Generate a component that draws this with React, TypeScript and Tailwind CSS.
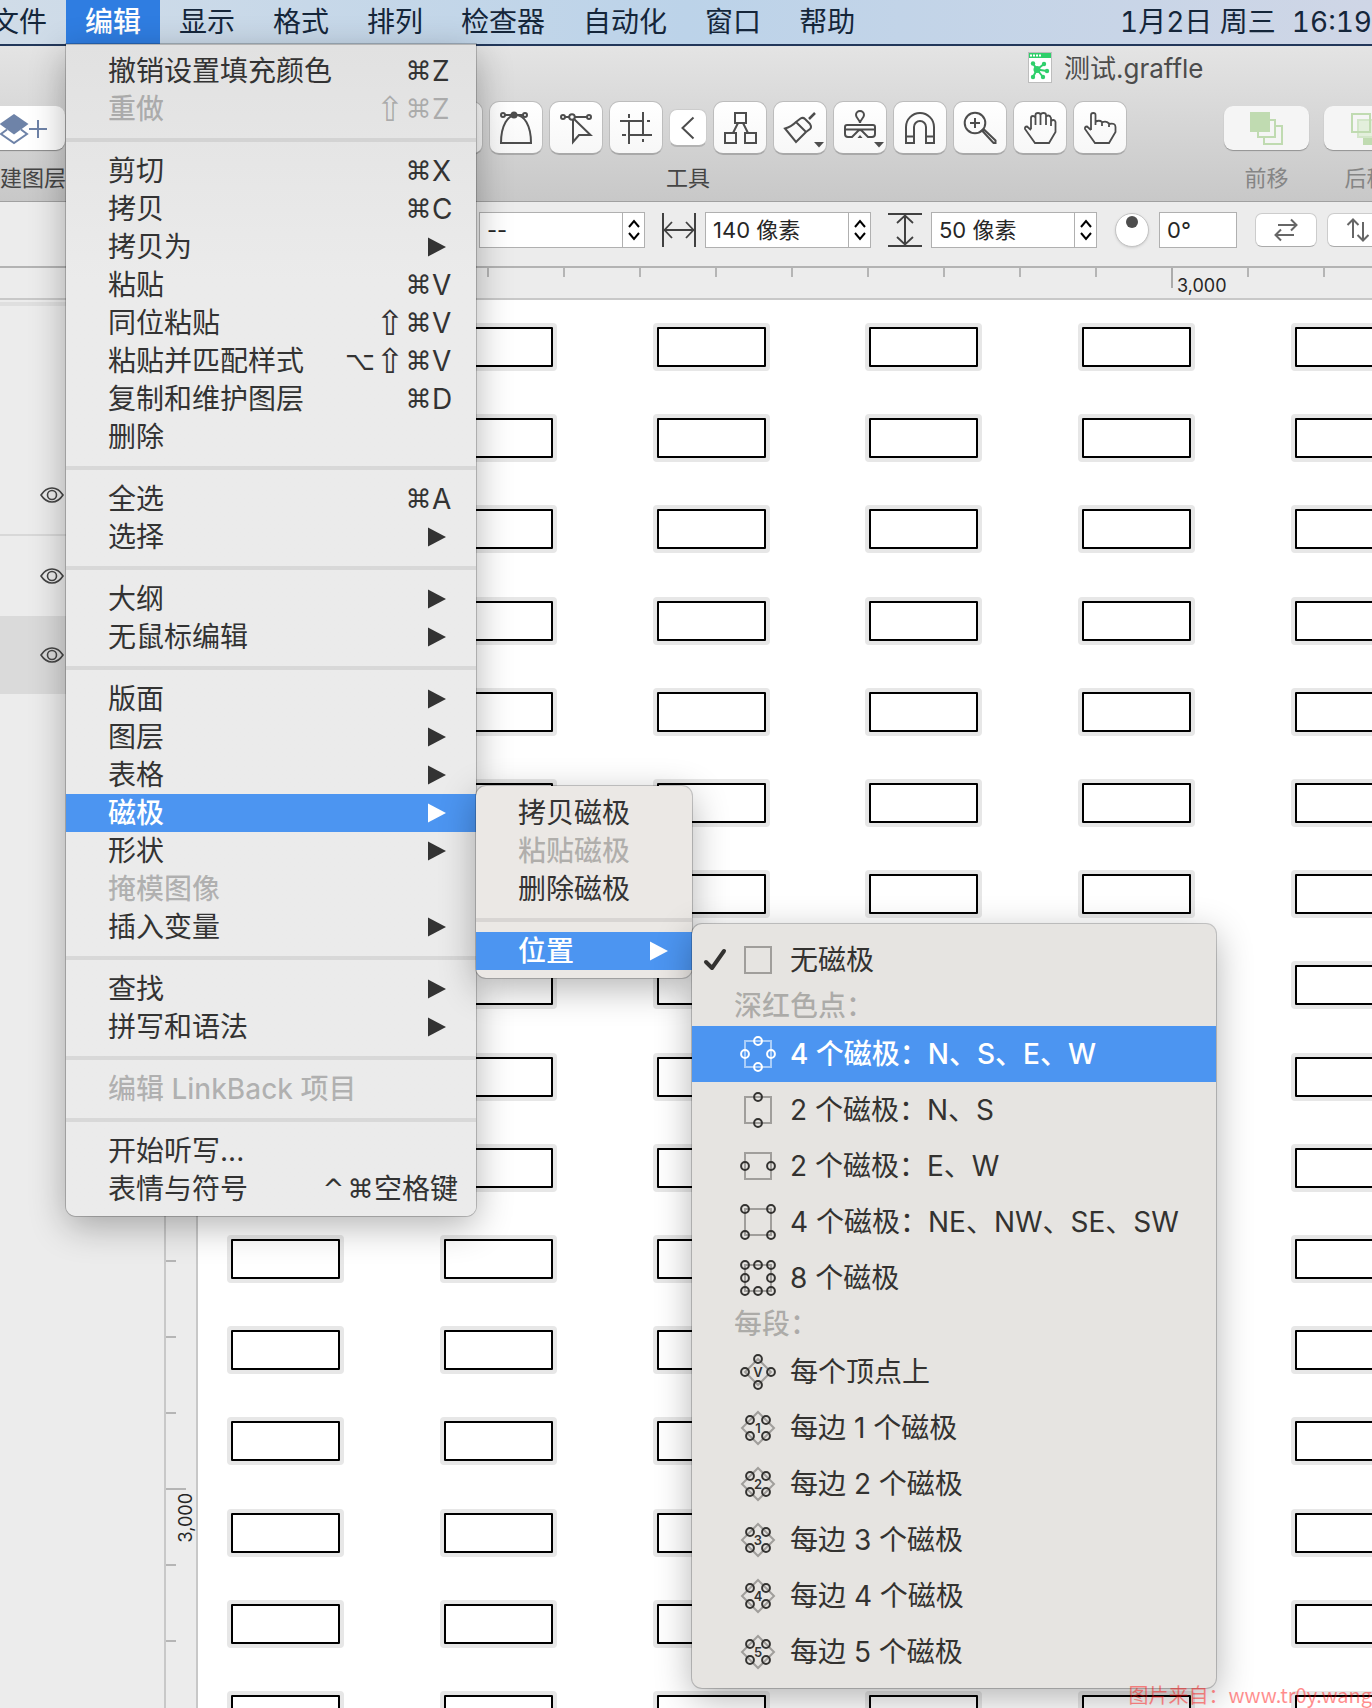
import React from 'react';

type Row = {
  label: string;
  mods?: string[];
  hotkey?: string;
  wide?: boolean;
  sub?: boolean;
  off?: boolean;
  on?: boolean;
};

const menuTitles = ['文件', '编辑', '显示', '格式', '排列', '检查器', '自动化', '窗口', '帮助'];

const editMenu: Row[][] = [
  [
    { label: '撤销设置填充颜色', mods: ['⌘'], hotkey: 'Z' },
    { label: '重做', mods: ['⇧', '⌘'], hotkey: 'Z', off: true },
  ],
  [
    { label: '剪切', mods: ['⌘'], hotkey: 'X' },
    { label: '拷贝', mods: ['⌘'], hotkey: 'C' },
    { label: '拷贝为', sub: true },
    { label: '粘贴', mods: ['⌘'], hotkey: 'V' },
    { label: '同位粘贴', mods: ['⇧', '⌘'], hotkey: 'V' },
    { label: '粘贴并匹配样式', mods: ['⌥', '⇧', '⌘'], hotkey: 'V' },
    { label: '复制和维护图层', mods: ['⌘'], hotkey: 'D' },
    { label: '删除' },
  ],
  [
    { label: '全选', mods: ['⌘'], hotkey: 'A' },
    { label: '选择', sub: true },
  ],
  [
    { label: '大纲', sub: true },
    { label: '无鼠标编辑', sub: true },
  ],
  [
    { label: '版面', sub: true },
    { label: '图层', sub: true },
    { label: '表格', sub: true },
    { label: '磁极', sub: true, on: true },
    { label: '形状', sub: true },
    { label: '掩模图像', off: true },
    { label: '插入变量', sub: true },
  ],
  [
    { label: '查找', sub: true },
    { label: '拼写和语法', sub: true },
  ],
  [{ label: '编辑 LinkBack 项目', off: true }],
  [
    { label: '开始听写...' },
    { label: '表情与符号', mods: ['^', '⌘'], hotkey: '空格键', wide: true },
  ],
];

const magnetMenu: Row[][] = [
  [{ label: '拷贝磁极' }, { label: '粘贴磁极', off: true }, { label: '删除磁极' }],
  [{ label: '位置', sub: true, on: true }],
];

function Arrow() {
  return (
    <svg className="h-5 w-[18px]" viewBox="0 0 18 20" fill="currentColor" aria-hidden="true">
      <path d="M0 0.5 18 10 0 19.5Z" />
    </svg>
  );
}

function Modifier({ mark }: { mark: string }) {
  const size = mark === '⇧' ? 'w-[30px] text-[34px]' : mark === '⌥' ? 'w-[30px] text-[26px]' : 'w-[27px] text-[26px]';
  return <span className={`text-center font-['DejaVu_Sans'] ${size}`}>{mark}</span>;
}

function MenuRow({ row, arrowPad }: { row: Row; arrowPad: string }) {
  const tone = row.on ? 'bg-[#4c95f1] text-white' : row.off ? 'text-black/25' : 'text-[#333333]';
  return (
    <button
      type="button"
      role="menuitem"
      disabled={row.off}
      className={`flex h-[38px] w-full items-center justify-between pl-[42px] text-[28px] leading-[36px] whitespace-nowrap ${tone}`}
    >
      <span className={row.on || row.off ? 'font-medium' : ''}>{row.label}</span>
      {row.sub && (
        <span className={arrowPad}>
          <Arrow />
        </span>
      )}
      {row.hotkey && (
        <span className="flex items-center pr-[18px]">
          {row.mods?.map((m) => (
            <Modifier key={m} mark={m} />
          ))}
          <span className={row.wide ? '' : 'w-[26px] text-left'}>{row.hotkey}</span>
        </span>
      )}
    </button>
  );
}

function MenuBody({ groups, arrowPad }: { groups: Row[][]; arrowPad: string }) {
  return (
    <>
      {groups.map((g, i) => (
        <React.Fragment key={i}>
          {i > 0 && (
            <div role="separator" className="py-[10px]">
              <div className="h-1 bg-black/8" />
            </div>
          )}
          {g.map((r) => (
            <MenuRow key={r.label} row={r} arrowPad={arrowPad} />
          ))}
        </React.Fragment>
      ))}
    </>
  );
}

type Pt = [number, number];
const N: Pt = [18, 5];
const S: Pt = [18, 31];
const W: Pt = [5, 18];
const E: Pt = [31, 18];
const CORNERS: Pt[] = [[5, 5], [31, 5], [5, 31], [31, 31]];

function MagnetIcon({ dots, shape, mark, on }: { dots: Pt[]; shape: 'square' | 'diamond' | 'wide'; mark?: string; on?: boolean }) {
  return (
    <svg className="size-9" viewBox="0 0 36 36" fill="none" strokeWidth="2" aria-hidden="true">
      <g stroke={on ? '#a9cdf9' : '#a09e9b'}>
        {shape === 'square' && <rect x="5" y="5" width="26" height="26" />}
        {shape === 'diamond' && <path d="M18 5 31 18 18 31 5 18Z" />}
        {shape === 'wide' && <path d="M18 2 34 18 18 34 2 18Z" />}
      </g>
      {dots.map(([x, y]) => (
        <circle key={`${x}-${y}`} cx={x} cy={y} r="3.9" stroke={on ? '#ffffff' : '#333230'} />
      ))}
      {mark && (
        <text x="18" y="23" textAnchor="middle" fontSize="13" fontWeight="600" fill="#333230" fontFamily="Inter, sans-serif">
          {mark}
        </text>
      )}
    </svg>
  );
}

const EDGE: Pt[] = [[10, 10], [26, 10], [10, 26], [26, 26]];

function PositionRow({ label, icon, on, checked }: { label: string; icon: React.ReactNode; on?: boolean; checked?: boolean }) {
  return (
    <button
      type="button"
      role="menuitemradio"
      aria-checked={!!checked}
      className={`flex h-14 w-full items-center text-[28px] whitespace-nowrap ${on ? 'bg-[#4c95f1] font-medium text-white' : 'text-[#333230]'}`}
    >
      <span className="flex w-12 shrink-0 pl-[11px]">
        {checked && (
          <svg className="size-6" viewBox="0 0 24 24" fill="none" stroke="currentColor" strokeWidth="4" strokeLinecap="round" strokeLinejoin="round" aria-hidden="true">
            <path d="M3 14 9 20 21 3" />
          </svg>
        )}
      </span>
      {icon}
      <span className="pl-[14px]">{label}</span>
    </button>
  );
}

function GroupHead({ children }: { children: string }) {
  return <div className="h-[38px] pl-[42px] text-[28px] leading-[36px] font-medium text-black/25">{children}</div>;
}

function ToolButton({ label, drop, children }: { label: string; drop?: boolean; children?: React.ReactNode }) {
  return (
    <button
      type="button"
      aria-label={label}
      className="size-[54px] rounded-[10px] border border-b-2 border-[#bdbdbd] border-b-[#a9a9a9] bg-gradient-to-b from-white to-[#f7f7f7]"
    >
      <svg className="-m-px size-[54px]" viewBox="0 0 54 54" fill="none" stroke="#4d4d4d" strokeWidth="2" aria-hidden="true">
        {children}
        {drop && <path d="M41 41H51L46 46.5Z" fill="#4d4d4d" stroke="none" />}
      </svg>
    </button>
  );
}

function Toolbar() {
  return (
    <div className="-ml-[22px] flex items-start text-[22px] leading-6 whitespace-nowrap text-[#454545]">
      <div className="flex shrink-0 flex-col items-center gap-[11px]">
        <div className="flex h-[54px] items-center">
          <button type="button" aria-label="新建图层" className="h-11 w-[86px] rounded-[9px] bg-white shadow-[0_1px_1px_rgba(0,0,0,0.35)]">
            <svg className="h-11 w-[86px]" viewBox="0 0 86 44" fill="none" stroke="#6e83a8" strokeWidth="2" aria-hidden="true">
              <path d="M28 23.5 22 28 35 37 48 28 42 23.5" />
              <path d="M35 8 49.500 18 35 28.500 20.500 18Z" fill="#6e83a8" stroke="none" />
              <path d="M50 23H68M59 14V32" />
            </svg>
          </button>
        </div>
        <span>新建图层</span>
      </div>
      <div className="ml-[183px] flex shrink-0 flex-col items-center gap-[11px]">
        <div className="flex h-[54px] items-center gap-[6px]">
          <ToolButton label="选择" />
          <ToolButton label="形状" />
          <ToolButton label="直线" />
          <ToolButton label="文本" />
          <ToolButton label="钢笔">
            <path d="M12 42C12 24 19 14 27 14S42 24 42 42Z" />
            <path d="M16 14H34" />
            <circle cx="14" cy="14" r="2" />
            <circle cx="36" cy="14" r="2" />
            <circle cx="25" cy="14" r="2.500" fill="#4d4d4d" />
          </ToolButton>
          <ToolButton label="点编辑">
            <path d="M16 16H20M26 16H38M24 19V41L30 34H41.500L25 18" />
            <circle cx="14" cy="16" r="2" />
            <circle cx="23" cy="16" r="2.800" />
            <circle cx="40" cy="16" r="2" />
          </ToolButton>
          <ToolButton label="画板">
            <path d="M20 20V43M20 13V17M34 11V35M34 38V41M11 20H35M38 20H41M19 34H43M13 34H17" />
          </ToolButton>
          <button
            type="button"
            aria-label="收起"
            className="size-[38px] rounded-lg border border-b-2 border-[#cccccc] border-b-[#b3b3b3] bg-white"
          >
            <svg className="-m-px size-[38px]" viewBox="0 0 38 38" fill="none" stroke="#4d4d4d" strokeWidth="2" aria-hidden="true">
              <path d="M24.500 8.500 13.500 19 24.500 29.500" />
            </svg>
          </button>
          <ToolButton label="图表">
            <rect x="22" y="12" width="11" height="10" />
            <rect x="12" y="32" width="11" height="10" />
            <rect x="32" y="32" width="11" height="10" />
            <path d="M25 22 20 32M30 22 35 32" />
          </ToolButton>
          <ToolButton label="样式刷" drop>
            <path d="M42 12 36 18" strokeWidth="2.500" />
            <path d="M23 21 27.500 17.500Q30 16 32 18L37 23Q39 26 37 28L33 31ZM23 21Q18 26 12 27.500L23 41Q27 37 33 31" />
          </ToolButton>
          <ToolButton label="图章" drop>
            <path d="M27 22C27 19 23 17 23 14A4 4 0 0 1 31 14C31 17 27 19 27 22Z" />
            <path d="M14 24H40Q42 24 42 26V33Q42 36 39 36H35L29 30Q27 28 25 30L19 36H15Q12 36 12 33V26Q12 24 14 24ZM12 28.500H42" />
            <path d="M27 34 29.500 37H24.500Z" fill="#4d4d4d" stroke="none" />
          </ToolButton>
          <ToolButton label="磁铁">
            <path d="M13 42V26A14 14 0 0 1 41 26V42H33V26A6 6 0 0 0 21 26V42ZM13 35.500H21M33 35.500H41" />
          </ToolButton>
          <ToolButton label="缩放">
            <circle cx="22" cy="22" r="10.300" />
            <path d="M22 17V27M17 22H27M29 29.500 31 28.500 42.500 39.500V42H40.500Z" />
          </ToolButton>
          <ToolButton label="手">
            <path d="M18 28V17Q18 15 20 15T22.500 17V24M22.500 17V14Q22.500 12 25 12T27.500 14V24M27.500 14Q28 12 30.500 12T33 14V24M33 15.500Q34 14.500 35.500 14.500T38 17V25M38 20Q39 19 40.500 19T42.500 21V31L36 42H22L12 28Q11.500 25.500 14 25.500L18 29" strokeWidth="1.800" />
          </ToolButton>
          <ToolButton label="浏览">
            <path d="M18 29V14Q18 12 20.300 12T22.500 14V24M22.500 21Q26 18.500 29 21V25M29 21.500Q33 19.500 36 22.500V26M36 23Q42.500 21.500 42.500 26V31L36 42H22L12 28Q11.500 25.500 14 25.500L18 29" strokeWidth="1.800" />
          </ToolButton>
        </div>
        <span>工具</span>
      </div>
      <div className="ml-[97px] flex shrink-0 gap-[15px] text-[#858585]">
        <div className="flex flex-col items-center gap-[11px]">
          <div className="flex h-[54px] items-center">
            <button type="button" aria-label="前移" className="h-11 w-[85px] rounded-[9px] bg-[#f5f5f5] shadow-[0_1px_1px_rgba(0,0,0,0.3)]">
              <svg className="h-11 w-[85px]" viewBox="0 0 85 44" fill="none" stroke="#c0dbb1" strokeWidth="2" aria-hidden="true">
                <rect x="40" y="20" width="18" height="18" />
                <rect x="34" y="14" width="17" height="17" fill="#f5f5f5" />
                <rect x="26" y="6" width="20" height="20" fill="#c0dbb1" stroke="none" />
              </svg>
            </button>
          </div>
          <span>前移</span>
        </div>
        <div className="flex flex-col items-center gap-[11px]">
          <div className="flex h-[54px] items-center">
            <button type="button" aria-label="后移" className="h-11 w-[85px] rounded-[9px] bg-[#f5f5f5] shadow-[0_1px_1px_rgba(0,0,0,0.3)]">
              <svg className="h-11 w-[85px]" viewBox="0 0 85 44" fill="none" stroke="#c0dbb1" strokeWidth="2" aria-hidden="true">
                <rect x="39" y="19" width="20" height="20" fill="#c0dbb1" stroke="none" />
                <rect x="34" y="14" width="17" height="17" fill="#e3efdc" stroke="#d3e6c9" />
                <rect x="28" y="8" width="18" height="18" />
              </svg>
            </button>
          </div>
          <span>后移</span>
        </div>
      </div>
    </div>
  );
}

function Field({ label, value }: { label: string; value: string }) {
  return (
    <div className="flex h-9 shrink-0">
      <input aria-label={label} defaultValue={value} className="w-36 border border-[#b0b0b0] bg-white px-[7px] text-[22px] text-[#262626] outline-none" />
      <button type="button" aria-label={`${label}增减`} className="w-[22px] border border-l-0 border-[#b0b0b0] bg-white">
        <svg className="mx-auto h-[22px] w-3" viewBox="0 0 12 22" fill="none" stroke="#000000" strokeWidth="2" aria-hidden="true">
          <path d="M1 8 6 2 11 8M1 14 6 20 11 14" />
        </svg>
      </button>
    </div>
  );
}

function SpanIcon({ upright }: { upright?: boolean }) {
  return (
    <svg className={`size-[34px] ${upright ? 'rotate-90' : ''}`} viewBox="0 0 34 34" fill="none" stroke="#404040" strokeWidth="2" aria-hidden="true">
      <path d="M1 0V34M33 0V34M1 17H33" />
      <path d="M10 9 2.500 17 10 25M24 9 31.500 17 24 25" strokeWidth="1.800" />
    </svg>
  );
}

function PropertyBar() {
  return (
    <div className="flex h-[66px] items-start border-b-2 border-[#b3b3b3] bg-[#ececec] pt-[10px] pl-[479px]">
      <Field label="垂直位置" value="--" />
      <div className="ml-[17px] flex shrink-0 items-center gap-[9px]">
        <SpanIcon />
        <Field label="宽度" value="140 像素" />
      </div>
      <div className="ml-[17px] flex shrink-0 items-center gap-[9px]">
        <SpanIcon upright />
        <Field label="高度" value="50 像素" />
      </div>
      <div className="ml-[18px] flex h-9 shrink-0 items-center gap-[10px]">
        <button type="button" aria-label="旋转" className="flex size-[34px] justify-center rounded-full border border-[#c4c4c4] bg-white pt-[2px] shadow-sm">
          <span className="size-3 rounded-full bg-[#4d4d4d]" />
        </button>
        <input aria-label="角度" defaultValue="0°" className="h-9 w-[78px] border border-[#b0b0b0] bg-white px-[7px] text-[22px] text-[#262626] outline-none" />
      </div>
      <div className="ml-[18px] flex h-9 shrink-0 items-center gap-[10px]">
        <button type="button" aria-label="水平翻转" className="flex h-[34px] w-[62px] items-center justify-center rounded-[7px] border border-[#cccccc] border-b-[#aaaaaa] bg-white">
          <svg className="size-6" viewBox="0 0 24 24" fill="none" stroke="#666666" strokeWidth="2" aria-hidden="true">
            <path d="M4 7H22M17 1.500 22.500 7 17 12.500M20 17H2M7 11.500 1.500 17 7 22.500" />
          </svg>
        </button>
        <button type="button" aria-label="垂直翻转" className="flex h-[34px] w-[62px] items-center justify-center rounded-[7px] border border-[#cccccc] border-b-[#aaaaaa] bg-white">
          <svg className="size-6" viewBox="0 0 24 24" fill="none" stroke="#666666" strokeWidth="2" aria-hidden="true">
            <path d="M7 20V2M1.500 7 7 1.500 12.500 7M17 4V22M11.500 17 17 22.500 22.500 17" />
          </svg>
        </button>
      </div>
    </div>
  );
}

function EyeRow({ selected, line }: { selected?: boolean; line?: boolean }) {
  return (
    <div className={`flex items-center pl-10 ${selected ? 'h-[78px] bg-[#dadada]' : 'h-20'} ${line ? 'border-b-2 border-[#d8d8d8]' : ''}`}>
      <button type="button" aria-label="显示图层">
        <svg className="h-4 w-6" viewBox="0 0 24 16" fill="none" stroke="#454545" strokeWidth="1.600" aria-hidden="true">
          <path d="M1 8Q5.500 1 12 1T23 8Q18.500 15 12 15T1 8Z" />
          <circle cx="12" cy="8" r="4.500" />
        </svg>
      </button>
    </div>
  );
}

const hTicks = Array.from({ length: 15 }, (_, i) => i);
const vTicks = Array.from({ length: 18 }, (_, i) => i);
const shapeCols = Array.from({ length: 6 }, (_, i) => 29 + Math.round(i * 212.8));
const shapeRows = Array.from({ length: 16 }, (_, i) => 23 + Math.round(i * 91.2));

function HRuler() {
  return (
    <div className="flex h-8 border-b-2 border-[#c8c8c8] bg-[#ececec]">
      <div className="w-[107px] shrink-0" />
      {hTicks.map((i) => (
        <div key={i} className="w-[76px] shrink-0">
          {i === 14 ? (
            <div className="flex h-5 w-[76px] border-l-2 border-[#ababab]">
              <span className="pt-[6px] pl-1 text-[18px] leading-[24px] text-[#262626]">3,000</span>
            </div>
          ) : (
            <div className="h-[9px] w-[2px] bg-[#b5b5b5]" />
          )}
        </div>
      ))}
      <div className="h-[9px] w-[76px] shrink-0 border-l-2 border-[#b5b5b5]" />
      <div className="h-[9px] w-[40px] shrink-0 border-l-2 border-[#b5b5b5]" />
    </div>
  );
}

function VRuler() {
  return (
    <div className="w-[34px] shrink-0 overflow-hidden border-x-2 border-[#c8c8c8] bg-[#ececec] pt-12">
      {vTicks.map((i) => (
        <div key={i} className={i === 17 ? 'h-[2px]' : 'h-[76px]'}>
          {i === 15 ? (
            <div className="w-5 border-t-2 border-[#b5b5b5]">
              <span className="mt-[3px] ml-[9px] block rotate-180 text-[18px] leading-[22px] text-[#262626] [writing-mode:vertical-rl]">3,000</span>
            </div>
          ) : (
            <div className="h-[2px] w-[10px] bg-[#b5b5b5]" />
          )}
        </div>
      ))}
    </div>
  );
}

export default function App() {
  return (
    <div className="relative flex min-h-screen flex-col overflow-hidden bg-white font-[Inter,'Noto_Sans_CJK_SC',sans-serif]">
      <nav className="flex h-[46px] items-stretch justify-between overflow-hidden border-b-2 border-[#22375a] bg-gradient-to-r from-[#d0dce8] via-[#bcd3e9] to-[#cfd6e6] text-[28px] leading-[44px] whitespace-nowrap text-[#15263a]">
        <div className="-ml-7 flex">
          {menuTitles.map((t) => (
            <button key={t} type="button" className={`px-[19px] ${t === '编辑' ? 'bg-[#2f7de1] font-medium text-white' : ''}`}>
              {t}
            </button>
          ))}
        </div>
        <div className="flex gap-4 tabular-nums">
          <span>1月2日 周三</span>
          <span>16:19</span>
        </div>
      </nav>

      <header className="overflow-hidden border-b border-[#a0a0a0] bg-gradient-to-b from-[#e4e4e4] to-[#c8c8c8] pb-[11px]">
        <div className="flex h-[55px] items-start gap-3 pt-[6px] pl-[1028px] text-[26px] leading-[34px] whitespace-nowrap text-[#4c4c4c]">
          <svg className="h-[31px] w-6 shrink-0" viewBox="0 0 24 31" aria-hidden="true">
            <rect x="0.500" y="0.500" width="23" height="30" fill="#ffffff" stroke="#bdbdbd" />
            <rect x="1" y="1" width="22" height="5" fill="#2fcf6b" />
            <path d="M2 3.500H13" stroke="#ffffff" strokeWidth="2" strokeDasharray="2 1" />
            <path d="M9 17.500 5 11.500M9 17.500 16 12M9 17.500 19 19M9 17.500 15 25M9 17.500 5 25" stroke="#2fcf6b" strokeWidth="2" />
            <g fill="#2fcf6b">
              <circle cx="9" cy="17.500" r="3.500" />
              <circle cx="5" cy="11.500" r="2.200" />
              <circle cx="16" cy="12" r="2.200" />
              <circle cx="19" cy="19" r="2.200" />
              <circle cx="15" cy="25" r="2.200" />
              <circle cx="5" cy="25" r="2.200" />
            </g>
          </svg>
          <h1>测试.graffle</h1>
        </div>
        <Toolbar />
      </header>

      <PropertyBar />
      <HRuler />

      <main className="flex flex-1">
        <aside className="w-[164px] shrink-0 bg-[#ececec] pt-[2px]">
          <div className="h-1 bg-[#dfdfdf]" />
          <div className="h-[150px]" />
          <EyeRow line />
          <EyeRow />
          <EyeRow selected />
        </aside>
        <VRuler />
        <section className="relative min-w-0 flex-1 overflow-hidden bg-white" aria-label="画布">
          {shapeRows.map((y) =>
            shapeCols.map((x) => (
              <div key={`${x}-${y}`} className="absolute h-12 w-[117px] rounded-[4px] border-4 border-[#e7e7e7]" style={{ left: x, top: y }}>
                <div className="h-full w-full rounded-[1px] border-2 border-black bg-white" />
              </div>
            )),
          )}
        </section>
      </main>

      <div role="menu" aria-label="编辑" className="absolute top-[44px] left-[66px] w-[410px] rounded-b-[10px] border-t border-[#b5b5b5] bg-gradient-to-b from-[#e1e1e1] via-[#ebebeb] via-20% to-[#ebebeb] pt-[7px] pb-2 shadow-[0_0_0_1px_rgba(0,0,0,0.2),0_10px_36px_rgba(0,0,0,0.3)]">
        <MenuBody groups={editMenu} arrowPad="pr-[30px]" />
      </div>

      <div role="menu" aria-label="磁极" className="absolute top-[786px] left-[476px] w-[216px] rounded-[10px] bg-[#ebe8e5] py-2 shadow-[0_0_0_1px_rgba(0,0,0,0.2),0_10px_36px_rgba(0,0,0,0.3)]">
        <MenuBody groups={magnetMenu} arrowPad="pr-6" />
      </div>

      <div role="menu" aria-label="位置" className="absolute top-[924px] left-[692px] w-[524px] rounded-[10px] bg-[#e6e4e1] pt-2 pb-2 shadow-[0_0_0_1px_rgba(0,0,0,0.2),0_10px_36px_rgba(0,0,0,0.3)]">
        <PositionRow label="无磁极" checked icon={<MagnetIcon shape="square" dots={[]} />} />
        <GroupHead>深红色点：</GroupHead>
        <PositionRow label="4 个磁极：N、S、E、W" on icon={<MagnetIcon shape="square" dots={[N, S, E, W]} on />} />
        <PositionRow label="2 个磁极：N、S" icon={<MagnetIcon shape="square" dots={[N, S]} />} />
        <PositionRow label="2 个磁极：E、W" icon={<MagnetIcon shape="square" dots={[E, W]} />} />
        <PositionRow label="4 个磁极：NE、NW、SE、SW" icon={<MagnetIcon shape="square" dots={CORNERS} />} />
        <PositionRow label="8 个磁极" icon={<MagnetIcon shape="square" dots={[N, S, E, W, ...CORNERS]} />} />
        <GroupHead>每段：</GroupHead>
        <PositionRow label="每个顶点上" icon={<MagnetIcon shape="diamond" dots={[N, S, E, W]} mark="V" />} />
        {['1', '2', '3', '4', '5'].map((n) => (
          <PositionRow key={n} label={`每边 ${n} 个磁极`} icon={<MagnetIcon shape="wide" dots={EDGE} mark={n} />} />
        ))}
      </div>

      <p className="absolute right-0 bottom-0 font-['Noto_Sans_CJK_SC'] text-[20px] leading-[26px] whitespace-nowrap text-[#ff0000]/45">图片来自：www.tr0y.wang</p>
    </div>
  );
}
